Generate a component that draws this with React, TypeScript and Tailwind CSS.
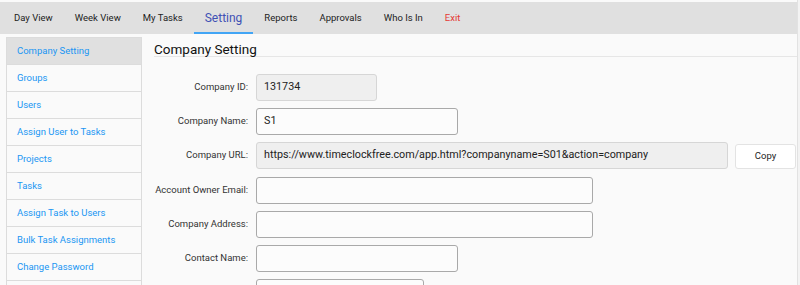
import React from "react";

const tabs = ["Day View", "Week View", "My Tasks", "Setting", "Reports", "Approvals", "Who Is In", "Exit"];

const sideLinks = [
  "Company Setting",
  "Groups",
  "Users",
  "Assign User to Tasks",
  "Projects",
  "Tasks",
  "Assign Task to Users",
  "Bulk Task Assignments",
  "Change Password",
];

function Field({
  label,
  value,
  width,
  readOnly,
  children,
}: {
  label: string;
  value?: string;
  width: string;
  readOnly?: boolean;
  children?: React.ReactNode;
}) {
  return (
    <div className="flex items-center h-[27px] mb-[7px]">
      <label className="w-[94px] shrink-0 text-right text-[9.5px] text-[#333]">{label}</label>
      <div
        className={`ml-[8px] h-[27px] ${width} rounded-[3px] border flex items-center px-[7px] text-[10.75px] text-[#222] ${
          readOnly ? "bg-[#efefef] border-[#d6d6d6]" : "bg-[#fcfcfc] border-[#a9a9a9]"
        }`}
      >
        {value}
      </div>
      {children}
    </div>
  );
}

export default function App() {
  return (
    <div className="w-[800px] h-[285px] overflow-hidden bg-[#f3f3f3] font-['Roboto',sans-serif]">
      <div className="w-[798px] h-full bg-[#fafafa] border-r border-[#e2e2e2] pt-[2px]">
        <nav className="h-[32px] bg-[#e0e0e0] flex items-stretch pl-[3px]">
          {tabs.map((t) => {
            const active = t === "Setting";
            return (
              <div
                key={t}
                className={`px-[11px] flex items-center ${
                  active
                    ? "text-[12px] text-[#3f51b5] border-b-2 border-[#42a5f5] pt-[2px]"
                    : t === "Exit"
                    ? "text-[9.5px] text-[#e53935]"
                    : "text-[9.5px] text-[#222]"
                }`}
              >
                {t}
              </div>
            );
          })}
        </nav>

        <div className="flex">
          <aside className="ml-[6px] mt-[3px] w-[136px] shrink-0 border border-[#dcdcdc] border-b-0 bg-[#fafafa]">
            {sideLinks.map((s, i) => (
              <div
                key={s}
                className={`h-[27px] border-b border-[#dcdcdc] flex items-center pl-[10px] text-[9.5px] text-[#2196f3] ${
                  i === 0 ? "bg-[#e0e0e0]" : ""
                }`}
              >
                {s}
              </div>
            ))}
          </aside>

          <main className="flex-1 ml-[12px]">
            <div className="h-[23px] border-b border-[#e6e6e6] flex items-center">
              <h1 className="text-[13.5px] text-[#111] leading-none pt-[9px]">Company Setting</h1>
            </div>
            <div className="mt-[17px]">
              <Field label="Company ID:" value="131734" width="w-[121px]" readOnly />
              <Field label="Company Name:" value="S1" width="w-[202px]" />
              <Field
                label="Company URL:"
                value="https://www.timeclockfree.com/app.html?companyname=S01&action=company"
                width="w-[472px]"
                readOnly
              >
                <button className="ml-[7px] mt-[2px] w-[61px] h-[25px] bg-white border border-[#e3e3e3] rounded-[3px] text-[9.5px] text-[#222]">
                  Copy
                </button>
              </Field>
              <div className="h-[1px]" />
              <Field label="Account Owner Email:" width="w-[337px]" />
              <Field label="Company Address:" width="w-[337px]" />
              <Field label="Contact Name:" width="w-[202px]" />
              <Field label="" width="w-[168px]" />
            </div>
          </main>
        </div>
      </div>
    </div>
  );
}
